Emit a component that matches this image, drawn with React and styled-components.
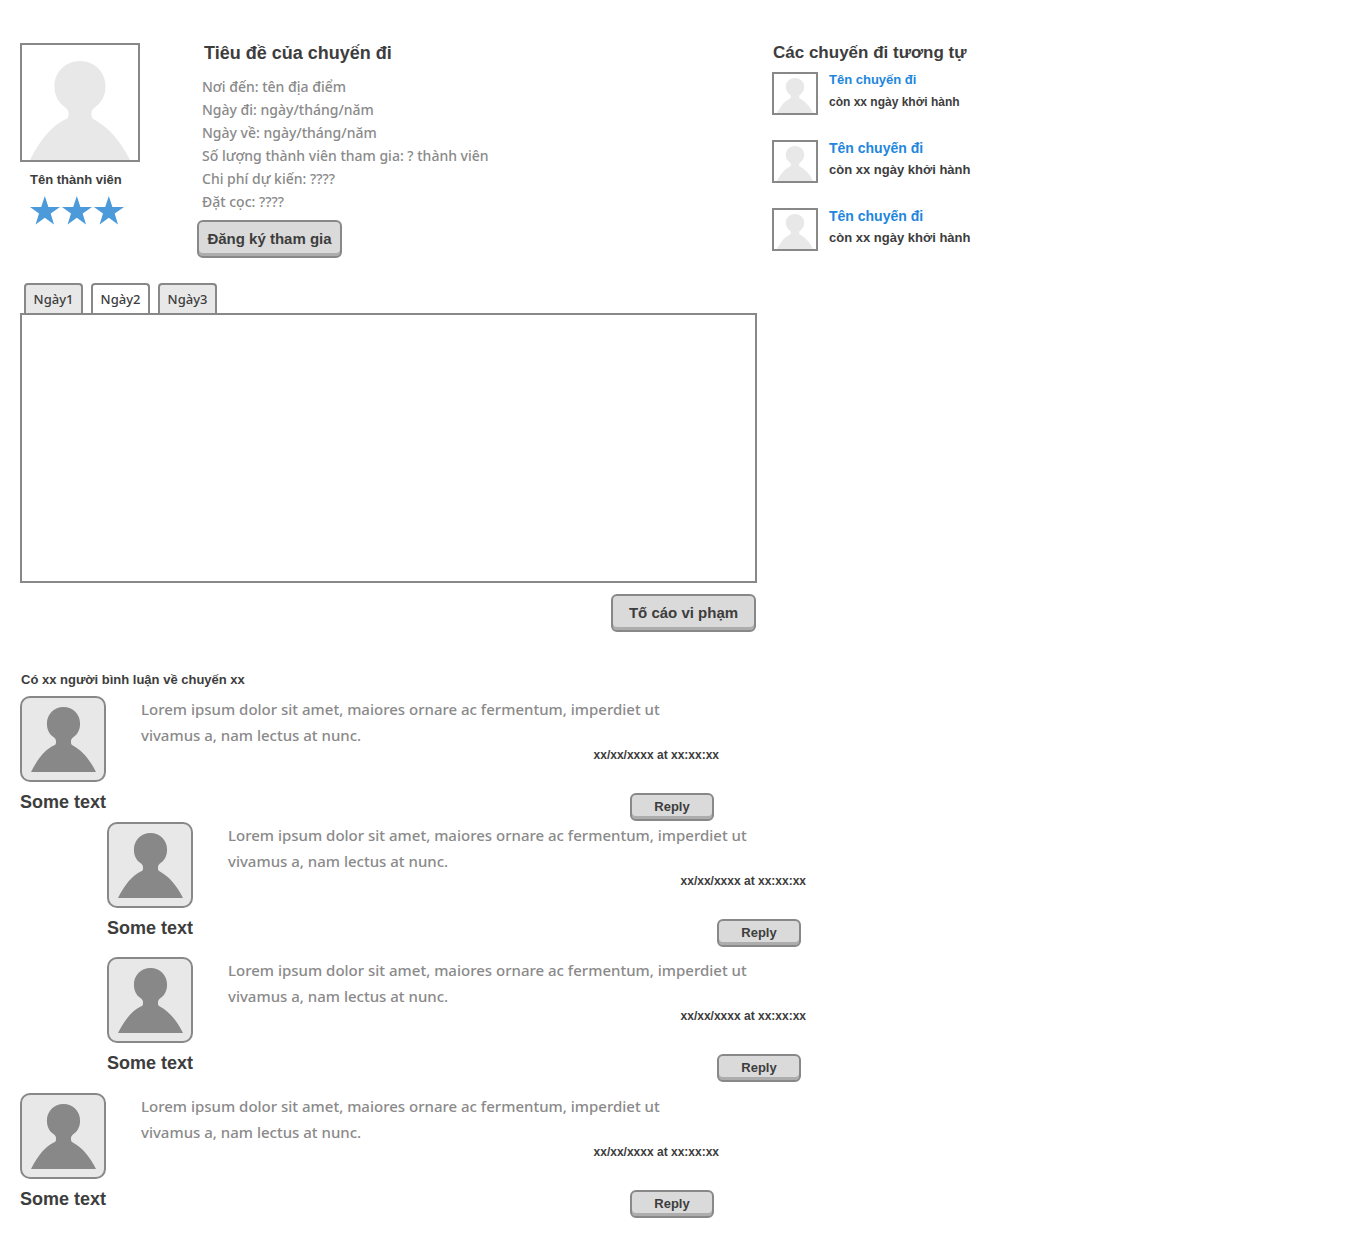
import React, { useState } from "react";
import styled, { createGlobalStyle } from "styled-components";

const ink = "#3d3d3d";
const line = "#888888";
const muted = "#8a8a8a";
const blue = "#2186dc";
const shade = "#e8e8e8";
const heading = '"Liberation Sans", Arial, sans-serif';
const body = '"Noto Sans", "Open Sans", sans-serif';

const GlobalStyle = createGlobalStyle`
  * { box-sizing: border-box; }
  body { margin: 0; background: #fff; color: ${ink}; font-family: ${heading}; }
  h1, h2, h3, p, ul { margin: 0; padding: 0; }
  ul { list-style: none; }
`;

const Page = styled.div`
  padding: 42px 20px 20px;
`;

const Columns = styled.div`
  display: grid;
  grid-template-columns: minmax(0, 737fr) minmax(0, 570fr);
  column-gap: 15px;
`;

const Trip = styled.section`
  display: flex;
  gap: 57px;
`;

const Member = styled.div`
  flex: 0 0 120px;
  padding-top: 1px;
`;

const Photo = styled.div`
  display: flex;
  flex: none;
  justify-content: center;
  align-items: flex-end;
  width: ${(p) => (p.$small ? 46 : 120)}px;
  height: ${(p) => (p.$small ? 43 : 119)}px;
  border: 2px solid ${line};
  color: ${shade};
`;

const MemberName = styled.p`
  padding: 8px 0 0 10px;
  font: bold 13px/20px ${heading};
`;

const Stars = styled.div`
  display: flex;
  gap: 1px;
  padding: 6px 0 0 10px;
`;

const Info = styled.div`
  flex: 1;
  min-width: 0;
`;

const Title = styled.h1`
  padding-left: 7px;
  font: bold 18px/22px ${heading};
`;

const Details = styled.ul`
  padding: 11px 0 7px 5px;
  color: ${muted};
  font: 500 14px/23px ${body};
`;

const Button = styled.button`
  display: block;
  min-width: ${(p) => (p.$small ? 84 : 145)}px;
  height: ${(p) => (p.$small ? 28 : 38)}px;
  padding: 0 8px;
  border: 2px solid ${line};
  border-radius: 6px;
  background: #dadada;
  box-shadow: inset 0 -3px 0 #adadad;
  color: ${ink};
  font: bold ${(p) => (p.$small ? 13 : 15)}px/20px ${heading};
  cursor: pointer;
`;

const Tabs = styled.div`
  display: flex;
  gap: 8px;
  padding: 25px 4px 0;
`;

const Tab = styled.button`
  min-width: 59px;
  height: 30px;
  padding: 0 7px;
  border: 2px solid ${line};
  border-bottom: 0;
  border-radius: 4px 4px 0 0;
  background: ${(p) => (p.$active ? "#fff" : shade)};
  color: ${ink};
  font: 500 13px/20px ${body};
  cursor: pointer;
`;

const Panel = styled.div`
  min-height: 270px;
  border: 2px solid ${line};
`;

const Report = styled.div`
  display: flex;
  justify-content: flex-end;
  padding: 11px 1px 0;
`;

const RelatedTitle = styled.h2`
  padding: 1px 1px 9px;
  font: bold 17px/20px ${heading};
`;

const RelatedList = styled.ul`
  display: grid;
  gap: 25px;
`;

const RelatedItem = styled.li`
  display: flex;
  gap: 11px;
`;

const RelatedText = styled.div`
  display: grid;
  align-content: start;
  gap: 3px;
  font: bold ${(p) => (p.$compact ? 12 : 13)}px/22px ${heading};
`;

const RelatedLink = styled.a`
  color: ${blue};
  font-size: ${(p) => (p.$compact ? 13 : 14)}px;
  line-height: 16px;
  text-decoration: none;
`;

const Comments = styled.section`
  padding-top: 38px;
`;

const Count = styled.h2`
  padding: 0 1px 6px;
  font: bold 13px/20px ${heading};
`;

const CommentList = styled.ul`
  display: grid;
  gap: 10px;
`;

const Replies = styled.ul`
  display: grid;
  gap: 9px;
  padding-left: 87px;
`;

const Comment = styled.article`
  display: flex;
  gap: 34px;
  max-width: 699px;
  min-height: 126px;
`;

const Author = styled.div`
  flex: 0 0 87px;
`;

const Portrait = styled.div`
  display: flex;
  justify-content: center;
  align-items: center;
  width: 86px;
  height: 86px;
  border: 2px solid ${line};
  border-radius: 10px;
  background: ${shade};
  color: ${line};
`;

const AuthorName = styled.h3`
  padding-top: 10px;
  font: bold 18px/20px ${heading};
  white-space: nowrap;
`;

const Content = styled.div`
  display: flex;
  flex: 1;
  flex-direction: column;
  align-items: flex-end;
  min-width: 0;
`;

const Message = styled.p`
  align-self: stretch;
  padding-right: 40px;
  color: ${muted};
  font: 500 15px/26px ${body};
`;

const Stamp = styled.time`
  font: bold 12px/14px ${heading};
`;

const Action = styled.div`
  padding: 31px 5px 0;
`;

function Silhouette({ width, height }) {
  return (
    <svg width={width} height={height} viewBox="0 0 100 99" preserveAspectRatio="none" fill="currentColor" aria-hidden="true">
      <path d="M50 0C64.5 0 75.5 11 75.5 25C75.5 35 71.5 41 66.5 45C62.5 48 61.5 49.5 61.5 52.5C61.5 56.5 62 57.5 65 59C78 66 90 79 100 99H0C10 79 22 64.5 35 58.5C38 57.5 38.5 56.5 38.5 52.5C38.5 49.5 37.5 48 33.5 45C28.5 41 24.5 35 24.5 25C24.5 11 35.5 0 50 0Z" />
    </svg>
  );
}

function Star() {
  return (
    <svg width="31" height="29" viewBox="0 0 31 29" fill="#4d9ada" aria-hidden="true">
      <path d="M14.8 0L18.4 11H30L20.7 17.6L24 28.5L14.8 21.8L5.6 28.5L9 17.6L0 11H11.2Z" />
    </svg>
  );
}

const details = [
  "Nơi đến: tên địa điểm",
  "Ngày đi: ngày/tháng/năm",
  "Ngày về: ngày/tháng/năm",
  "Số lượng thành viên tham gia: ? thành viên",
  "Chi phí dự kiến: ????",
  "Đặt cọc: ????",
];

const days = ["Ngày1", "Ngày2", "Ngày3"];

const related = [
  { id: 1, compact: true },
  { id: 2, compact: false },
  { id: 3, compact: false },
];

const thread = [
  { id: 1, replies: [{ id: 2 }, { id: 3 }] },
  { id: 4, replies: [] },
];

function CommentCard() {
  return (
    <Comment>
      <Author>
        <Portrait><Silhouette width={65} height={65} /></Portrait>
        <AuthorName>Some text</AuthorName>
      </Author>
      <Content>
        <Message>
          Lorem ipsum dolor sit amet, maiores ornare ac fermentum, imperdiet ut vivamus a, nam lectus at nunc.
        </Message>
        <Stamp>xx/xx/xxxx at xx:xx:xx</Stamp>
        <Action><Button type="button" $small>Reply</Button></Action>
      </Content>
    </Comment>
  );
}

export default function App() {
  const [day, setDay] = useState(1);
  return (
    <Page>
      <GlobalStyle />
      <Columns>
        <main>
          <Trip>
            <Member>
              <Photo><Silhouette width={100} height={99} /></Photo>
              <MemberName>Tên thành viên</MemberName>
              <Stars role="img" aria-label="3 sao"><Star /><Star /><Star /></Stars>
            </Member>
            <Info>
              <Title>Tiêu đề của chuyến đi</Title>
              <Details>{details.map((d) => <li key={d}>{d}</li>)}</Details>
              <Button type="button">Đăng ký tham gia</Button>
            </Info>
          </Trip>
          <Tabs role="tablist">
            {days.map((d, i) => (
              <Tab key={d} id={`tab-${i}`} type="button" role="tab" aria-controls="day-panel" aria-selected={i === day} $active={i === day} onClick={() => setDay(i)}>
                {d}
              </Tab>
            ))}
          </Tabs>
          <Panel id="day-panel" role="tabpanel" aria-labelledby={`tab-${day}`} />
          <Report><Button type="button">Tố cáo vi phạm</Button></Report>
        </main>
        <aside>
          <RelatedTitle>Các chuyến đi tương tự</RelatedTitle>
          <RelatedList>
            {related.map((r) => (
              <RelatedItem key={r.id}>
                <Photo $small><Silhouette width={36} height={35} /></Photo>
                <RelatedText $compact={r.compact}>
                  <RelatedLink href="#" $compact={r.compact}>Tên chuyến đi</RelatedLink>
                  <p>còn xx ngày khởi hành</p>
                </RelatedText>
              </RelatedItem>
            ))}
          </RelatedList>
        </aside>
      </Columns>
      <Comments>
        <Count>Có xx người bình luận về chuyến xx</Count>
        <CommentList>
          {thread.map((c) => (
            <li key={c.id}>
              <CommentCard />
              {c.replies.length > 0 && (
                <Replies>{c.replies.map((r) => <li key={r.id}><CommentCard /></li>)}</Replies>
              )}
            </li>
          ))}
        </CommentList>
      </Comments>
    </Page>
  );
}
